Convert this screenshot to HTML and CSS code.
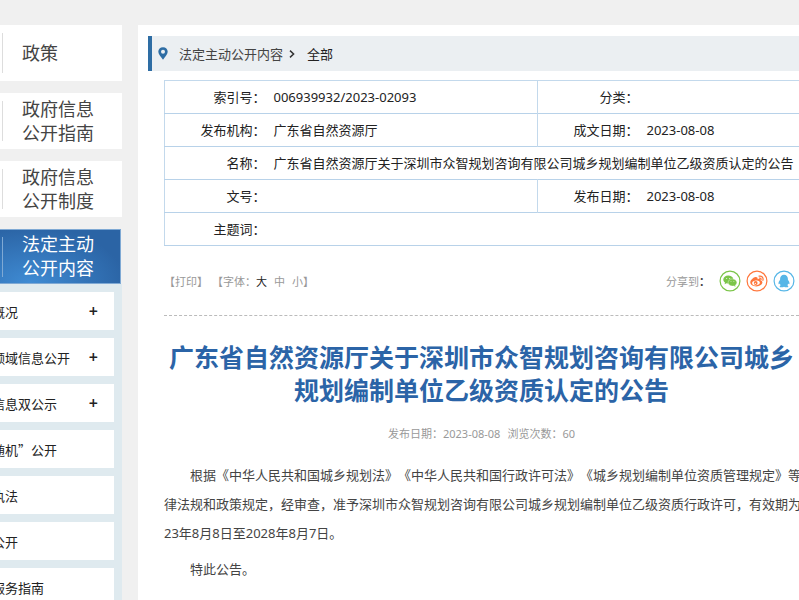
FILE: index.html
```html
<!DOCTYPE html>
<html lang="zh-CN">
<head>
    <meta charset="UTF-8">
    <meta name="viewport" content="width=device-width, initial-scale=1.0">
    <title>广东省自然资源厅</title>
    <link rel="stylesheet" href="styles.css">
</head>
<body>
    <div class="page">
        <nav class="sidebar">
            <a class="side-link" href="#"><span>政策</span></a>
            <a class="side-link" href="#"><span>政府信息<br>公开指南</span></a>
            <a class="side-link" href="#"><span>政府信息<br>公开制度</span></a>
            <a class="side-link active" href="#"><span>法定主动<br>公开内容</span></a>
            <ul class="side-list">
                <li><a href="#">概况</a><button type="button">+</button></li>
                <li><a href="#">领域信息公开</a><button type="button">+</button></li>
                <li><a href="#">信息双公示</a><button type="button">+</button></li>
                <li><a href="#">随机”公开</a></li>
                <li><a href="#">执法</a></li>
                <li><a href="#">公开</a></li>
                <li><a href="#">服务指南</a></li>
            </ul>
        </nav>

        <main class="main">
            <div class="crumbs">
                <svg class="pin" viewBox="0 0 10 13" width="10" height="13"><path fill="#2e6da4" fill-rule="evenodd" d="M5 .2C2.200.2.300 2.200.300 4.800c0 2.900 3 5.200 4.700 7.900C6.700 10 9.700 7.700 9.700 4.800 9.700 2.200 7.800.2 5 .2zM5 2.800a2 2 0 1 1 0 4 2 2 0 0 1 0-4z"/></svg>
                <a href="#">法定主动公开内容</a>
                <svg class="arrow" viewBox="0 0 6 8" width="6" height="8"><path fill="none" stroke="#333" stroke-width="1.5" d="M1 .6 4.600 4 1 7.400"/></svg>
                <a class="current" href="#">全部</a>
            </div>

            <div class="content">
                <table class="info">
                    <colgroup>
                        <col class="col-label"><col class="col-left"><col class="col-label"><col>
                    </colgroup>
                    <tr>
                        <th>索引号：</th><td>006939932/2023-02093</td>
                        <th class="split">分类：</th><td></td>
                    </tr>
                    <tr>
                        <th>发布机构：</th><td>广东省自然资源厅</td>
                        <th class="split">成文日期：</th><td>2023-08-08</td>
                    </tr>
                    <tr>
                        <th>名称：</th><td colspan="3">广东省自然资源厅关于深圳市众智规划咨询有限公司城乡规划编制单位乙级资质认定的公告</td>
                    </tr>
                    <tr>
                        <th>文号：</th><td></td>
                        <th class="split">发布日期：</th><td>2023-08-08</td>
                    </tr>
                    <tr>
                        <th>主题词：</th><td colspan="3"></td>
                    </tr>
                </table>

                <div class="tools">
                    <div class="tools-left">
                        <button type="button">【打印】</button>
                        <span class="sizes">【字体：<button type="button" class="on">大</button><button type="button">中</button><button type="button">小</button>】</span>
                    </div>
                    <div class="share">
                        <span class="share-label">分享到<b>：</b></span>
                        <a href="#" aria-label="微信">
                            <svg viewBox="0 0 22 22" width="22" height="22">
                                <circle cx="11" cy="11" r="9.900" fill="#fff" stroke="#7bc549" stroke-width="1.200"/>
                                <path fill="#7bc549" d="M9.200 5.600c-2.800 0-4.900 1.700-4.900 4 0 1.300.7 2.300 1.700 3l-.4 1.600 1.900-1c.7.2 1.500.3 2.300.3 1-2.500 3-4 4.700-4.300C13.800 7 11.700 5.600 9.200 5.600z"/>
                                <path fill="#7bc549" stroke="#fff" stroke-width=".4" d="M13.400 8.900c-2.500 0-4.300 1.600-4.300 3.600s1.800 3.600 4.300 3.600c.5 0 1-.1 1.500-.2l1.800 1-.4-1.600c1-.7 1.600-1.700 1.600-2.800 0-2-1.900-3.600-4.500-3.600z"/>
                                <g fill="#fff"><circle cx="7.700" cy="8.500" r=".5"/><circle cx="10.700" cy="8.500" r=".5"/><circle cx="12" cy="11.500" r=".4"/><circle cx="14.900" cy="11.500" r=".4"/></g>
                            </svg>
                        </a>
                        <a href="#" aria-label="微博">
                            <svg viewBox="0 0 22 22" width="22" height="22">
                                <circle cx="11" cy="11" r="9.900" fill="#fff" stroke="#ff763b" stroke-width="1.200"/>
                                <path fill="#ff763b" d="M9.600 7.100c-2.100.2-5.300 3.100-5.300 5.400 0 2.300 2.800 3.900 5.900 3.900 3.800 0 6.200-2.200 6.200-4.100 0-1.100-.9-1.700-1.800-1.900.4-1.400-.9-1.900-3-1.100.3-1.500-.5-2.300-2-2.200z"/>
                                <ellipse cx="10" cy="12.900" rx="3.900" ry="2.400" fill="#fff" transform="rotate(-8 10 12.900)"/>
                                <circle cx="9.700" cy="13" r="1.900" fill="#ff763b"/>
                                <circle cx="9.300" cy="13.400" r=".6" fill="#fff"/>
                                <path fill="none" stroke="#ff763b" stroke-width="1.200" stroke-linecap="round" d="M13 6.200c2.700-.6 4.700 1.400 3.900 4.100M13.300 8.100c1.300-.2 2 .5 1.700 1.700"/>
                            </svg>
                        </a>
                        <a href="#" aria-label="QQ">
                            <svg viewBox="0 0 22 22" width="22" height="22">
                                <circle cx="11" cy="11" r="9.900" fill="#fff" stroke="#56b6e7" stroke-width="1.200"/>
                                <path fill="#56b6e7" d="M11 4.700c-2.400 0-3.900 1.700-3.900 4v1.100c-1 1.200-1.600 2.400-1.600 3.600 0 1 .6 1.100 1.300.1.200.8.500 1.300.9 1.800-.7.300-1 .7-1 1.100 0 1.200 3.200 1.200 4.300.3 1.100.9 4.300.9 4.300-.3 0-.4-.3-.8-1-1.100.4-.5.700-1 .9-1.800.7 1 1.300.9 1.300-.1 0-1.200-.6-2.400-1.600-3.600V8.700c0-2.300-1.500-4-3.900-4z"/>
                            </svg>
                        </a>
                    </div>
                </div>

                <article class="article">
                    <h1>广东省自然资源厅关于深圳市众智规划咨询有限公司城乡规划编制单位乙级资质认定的公告</h1>
                    <div class="meta"><span>发布日期：2023-08-08</span><span>浏览次数：60</span></div>
                    <p>根据《中华人民共和国城乡规划法》《中华人民共和国行政许可法》《城乡规划编制单位资质管理规定》等法<br>律法规和政策规定，经审查，准予深圳市众智规划咨询有限公司城乡规划编制单位乙级资质行政许可，有效期为20<br>23年8月8日至2028年8月7日。</p>
                    <p>特此公告。</p>
                </article>
            </div>
        </main>
    </div>
</body>
</html>
```

FILE: styles.css
```css
* {
    box-sizing: border-box;
}

body {
    margin: 0;
    height: 100vh;
    overflow: hidden;
    background-color: #f0f0f0;
    color: #222;
    font-family: "Noto Sans", "Noto Sans CJK SC", sans-serif;
    font-size: 13px;
    text-spacing-trim: space-all;
}

a {
    color: inherit;
    text-decoration: none;
}

button {
    padding: 0;
    border: none;
    background: none;
    color: inherit;
    font: inherit;
    cursor: pointer;
}

.page {
    display: flex;
    gap: 16px;
    min-height: 100vh;
    padding-top: 25px;
}

/* sidebar */
.sidebar {
    flex: 0 0 122px;
    font-family: "Noto Sans CJK SC", sans-serif;
}

.side-link {
    display: flex;
    align-items: center;
    height: 56px;
    margin-bottom: 12px;
    padding-left: 2px;
    background-color: #fff;
    color: #444;
    font-size: 18px;
    line-height: 24px;
}

.side-link span {
    display: flex;
    align-items: center;
    height: 40px;
    padding: 0 0 3px 19px;
    border-left: 1px solid #ddd;
}

.side-link.active {
    width: 121px;
    height: 55px;
    margin-bottom: 0;
    border: solid #7fa9d4;
    border-width: 1px 1px 1px 0;
    background: radial-gradient(ellipse at 25% 100%, #3f8bd3, #2b64a5 75%);
    color: #fff;
}

.side-link.active span {
    border-left-color: #7fa9d4;
}

.side-list {
    margin: 0;
    padding: 8px 8px 8px 0;
    background-color: #dfeaef;
    list-style: none;
}

.side-list li {
    display: flex;
    align-items: center;
    justify-content: space-between;
    height: 38px;
    margin-bottom: 8px;
    padding-right: 16px;
    background-color: #fff;
}

.side-list a {
    margin-left: -8px;
}

.side-list button {
    font-family: "Noto Sans", sans-serif;
    font-size: 16px;
    font-weight: 600;
}

/* main column */
.main {
    flex: 1;
    min-width: 0;
    padding: 11px 0 0 10px;
    background-color: #fff;
}

.crumbs {
    display: flex;
    align-items: center;
    height: 35px;
    padding-left: 6px;
    border-left: 4px solid #2e6da4;
    background-color: #ebeff2;
    color: #444;
}

.crumbs .pin {
    margin-right: 11px;
}

.crumbs .arrow {
    margin: 0 12px 0 6px;
}

.crumbs .current {
    color: #222;
}

.content {
    padding: 9px 0 0 16px;
}

.info {
    width: 100%;
    border: 1px solid #c3d9ec;
    border-right: none;
    border-collapse: collapse;
    table-layout: fixed;
}

.col-label {
    width: 101px;
}

.col-left {
    width: 272px;
}

.info tr {
    border-bottom: 1px solid #b8d2e9;
}

.info th,
.info td {
    height: 33px;
    padding: 0;
    font-weight: normal;
    line-height: 20px;
    white-space: nowrap;
}

.info th {
    text-align: right;
}

.info td {
    padding-left: 8px;
    text-align: left;
}

.info .split {
    border-left: 1px solid #c3d9ec;
}

.tools {
    display: flex;
    align-items: center;
    justify-content: space-between;
    height: 70px;
    padding-right: 4px;
    border-bottom: 1px dashed #bbb;
    color: #999;
    font-size: 11px;
}

.tools-left,
.share {
    display: flex;
    align-items: center;
}

.tools-left {
    gap: 4px;
}

.sizes button {
    margin-right: 7px;
}

.sizes button:last-child {
    margin-right: 0;
}

.sizes .on {
    color: #222;
}

.share {
    gap: 5px;
}

.share-label {
    margin-right: 4px;
}

.share-label b {
    color: #444;
}

.share a {
    display: flex;
}

/* article */
.article h1 {
    margin: 25px 0 18px;
    color: #2b64a7;
    font-size: 25px;
    line-height: 33px;
    text-align: center;
}

.meta {
    display: flex;
    justify-content: center;
    gap: 7px;
    margin-bottom: 18px;
    color: #999;
    font-size: 11px;
    line-height: 18px;
}

.article p {
    margin: 0 0 7px;
    color: #444;
    line-height: 29px;
    text-indent: 2em;
    white-space: nowrap;
}
```
